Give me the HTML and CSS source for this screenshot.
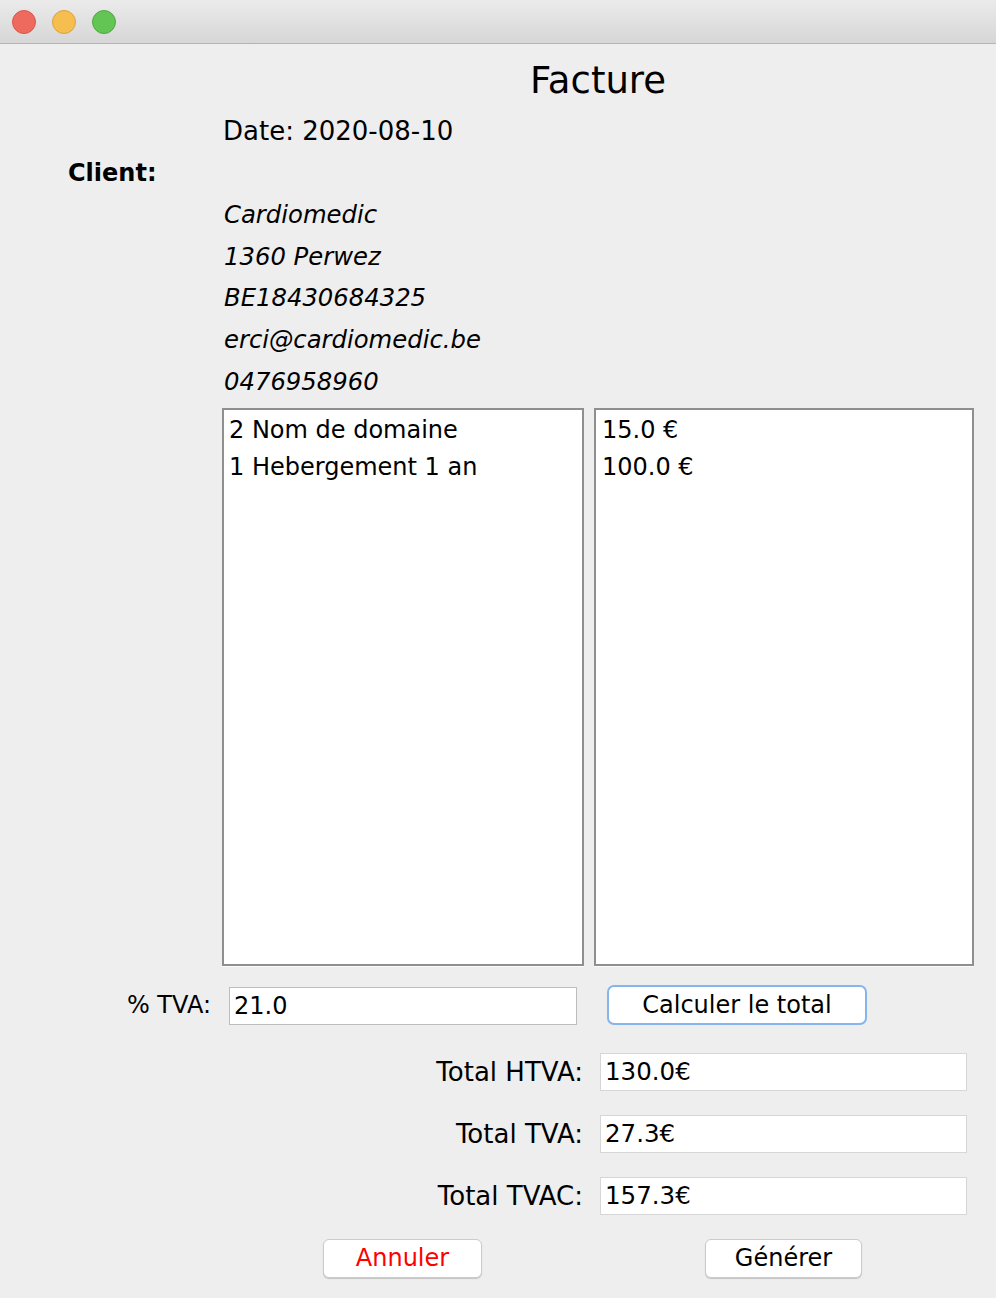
FILE: index.html
```html
<!DOCTYPE html>
<html lang="fr">
<head>
<meta charset="utf-8">
<title>Facture</title>
<link rel="stylesheet" href="styles.css">
</head>
<body>
<div class="window">
  <div class="titlebar">
    <span class="light red"></span>
    <span class="light yellow"></span>
    <span class="light green"></span>
  </div>
  <div class="content">
    <h1 class="title">Facture</h1>
    <div class="date">Date: 2020-08-10</div>
    <div class="client">
      <div class="client-label">Client:</div>
      <div class="client-info">
        <div class="info-line">Cardiomedic</div>
        <div class="info-line">1360 Perwez</div>
        <div class="info-line">BE18430684325</div>
        <div class="info-line">erci@cardiomedic.be</div>
        <div class="info-line">0476958960</div>
      </div>
    </div>
    <div class="lists">
      <div class="listbox items">
        <div class="list-item">2 Nom de domaine</div>
        <div class="list-item">1 Hebergement 1 an</div>
      </div>
      <div class="listbox prices">
        <div class="list-item">15.0 €</div>
        <div class="list-item">100.0 €</div>
      </div>
    </div>
    <div class="tva-row">
      <div class="tva-label">% TVA:</div>
      <div class="field tva-field">21.0</div>
      <div class="btn btn-calc">Calculer le total</div>
    </div>
    <div class="totals">
      <div class="total-row">
        <div class="total-label">Total HTVA:</div>
        <div class="field total-field">130.0€</div>
      </div>
      <div class="total-row">
        <div class="total-label">Total TVA:</div>
        <div class="field total-field">27.3€</div>
      </div>
      <div class="total-row">
        <div class="total-label">Total TVAC:</div>
        <div class="field total-field">157.3€</div>
      </div>
    </div>
    <div class="actions">
      <div class="btn btn-action btn-cancel">Annuler</div>
      <div class="btn btn-action btn-generate">Générer</div>
    </div>
  </div>
</div>
</body>
</html>
```
FILE: styles.css
```css
* { box-sizing: border-box; }
html, body {
  margin: 0;
  padding: 0;
  background: #eeeeee;
}
body {
  font-family: "DejaVu Sans", "Liberation Sans", sans-serif;
  color: #000;
  width: 996px;
  height: 1298px;
  overflow: hidden;
}
.titlebar {
  height: 44px;
  background: linear-gradient(#ebebeb, #d6d6d6);
  border-bottom: 1px solid #b4b4b4;
  display: flex;
  align-items: center;
  gap: 16px;
  padding-left: 12px;
  padding-top: 1px;
}
.light {
  width: 24px;
  height: 24px;
  border-radius: 50%;
  display: block;
}
.red { background: #ee6a5f; border: 1px solid #d8574c; }
.yellow { background: #f5be4f; border: 1px solid #d9a33f; }
.green { background: #62c554; border: 1px solid #52a842; }

.content {
  padding-top: 12px;
}
.title {
  margin: 0 0 0 229px;
  width: 738px;
  text-align: center;
  font-size: 37px;
  font-weight: normal;
  line-height: 50px;
}
.date {
  margin: 7px 0 0 223px;
  font-size: 26px;
  line-height: 36px;
}
.client {
  display: flex;
  margin-top: 3px;
  font-size: 24px;
  line-height: 42px;
}
.client-label {
  width: 224px;
  padding-left: 68px;
  font-weight: bold;
}
.client-info {
  padding-top: 42px;
  font-style: italic;
  font-size: 24.3px;
}
.info-line {
  height: 41.7px;
  line-height: 41.7px;
}
.lists {
  display: flex;
  gap: 10px;
  margin: 6px 0 0 222px;
}
.listbox {
  height: 558px;
  background: #fff;
  border: 2px solid #8f8f8f;
  box-shadow: 0 1px 0 #fbfbfb;
  font-size: 24px;
  line-height: 37px;
  padding-top: 2px;
}
.items { width: 362px; padding-left: 5px; }
.prices { width: 380px; padding-left: 6px; }

.tva-row {
  display: flex;
  align-items: center;
  margin-top: 19px;
  height: 40px;
}
.tva-label {
  width: 211px;
  text-align: right;
  font-size: 24px;
  margin-right: 18px;
}
.field {
  background: #fff;
  height: 38px;
  font-size: 24px;
  line-height: 36px;
  padding-left: 4px;
}
.tva-field {
  width: 348px;
  border: 1px solid #bdbdbd;
  margin-right: 30px;
  margin-top: 2px;
}
.btn {
  background: #fff;
  text-align: center;
  font-size: 24px;
}
.btn-calc {
  width: 260px;
  height: 40px;
  line-height: 36px;
  border: 2px solid #85b5ec;
  border-radius: 7px;
}
.totals {
  display: flex;
  flex-direction: column;
  gap: 24px;
  margin-top: 28px;
}
.total-row {
  display: flex;
  align-items: center;
}
.total-label {
  width: 584px;
  text-align: right;
  font-size: 26px;
  padding-right: 1px;
  margin-right: 16px;
}
.total-field {
  width: 367px;
  border: 1px solid #d6d6d6;
  font-size: 24.5px;
}
.actions {
  display: flex;
  margin: 24px 0 0 323px;
}
.btn-action {
  height: 39px;
  line-height: 36px;
  border: 1px solid #cbcbcb;
  border-radius: 6px;
  box-shadow: 0 1px 1px rgba(0,0,0,0.18);
}
.btn-cancel {
  width: 159px;
  color: #ff0000;
  margin-right: 223px;
}
.btn-generate {
  width: 157px;
}
```
